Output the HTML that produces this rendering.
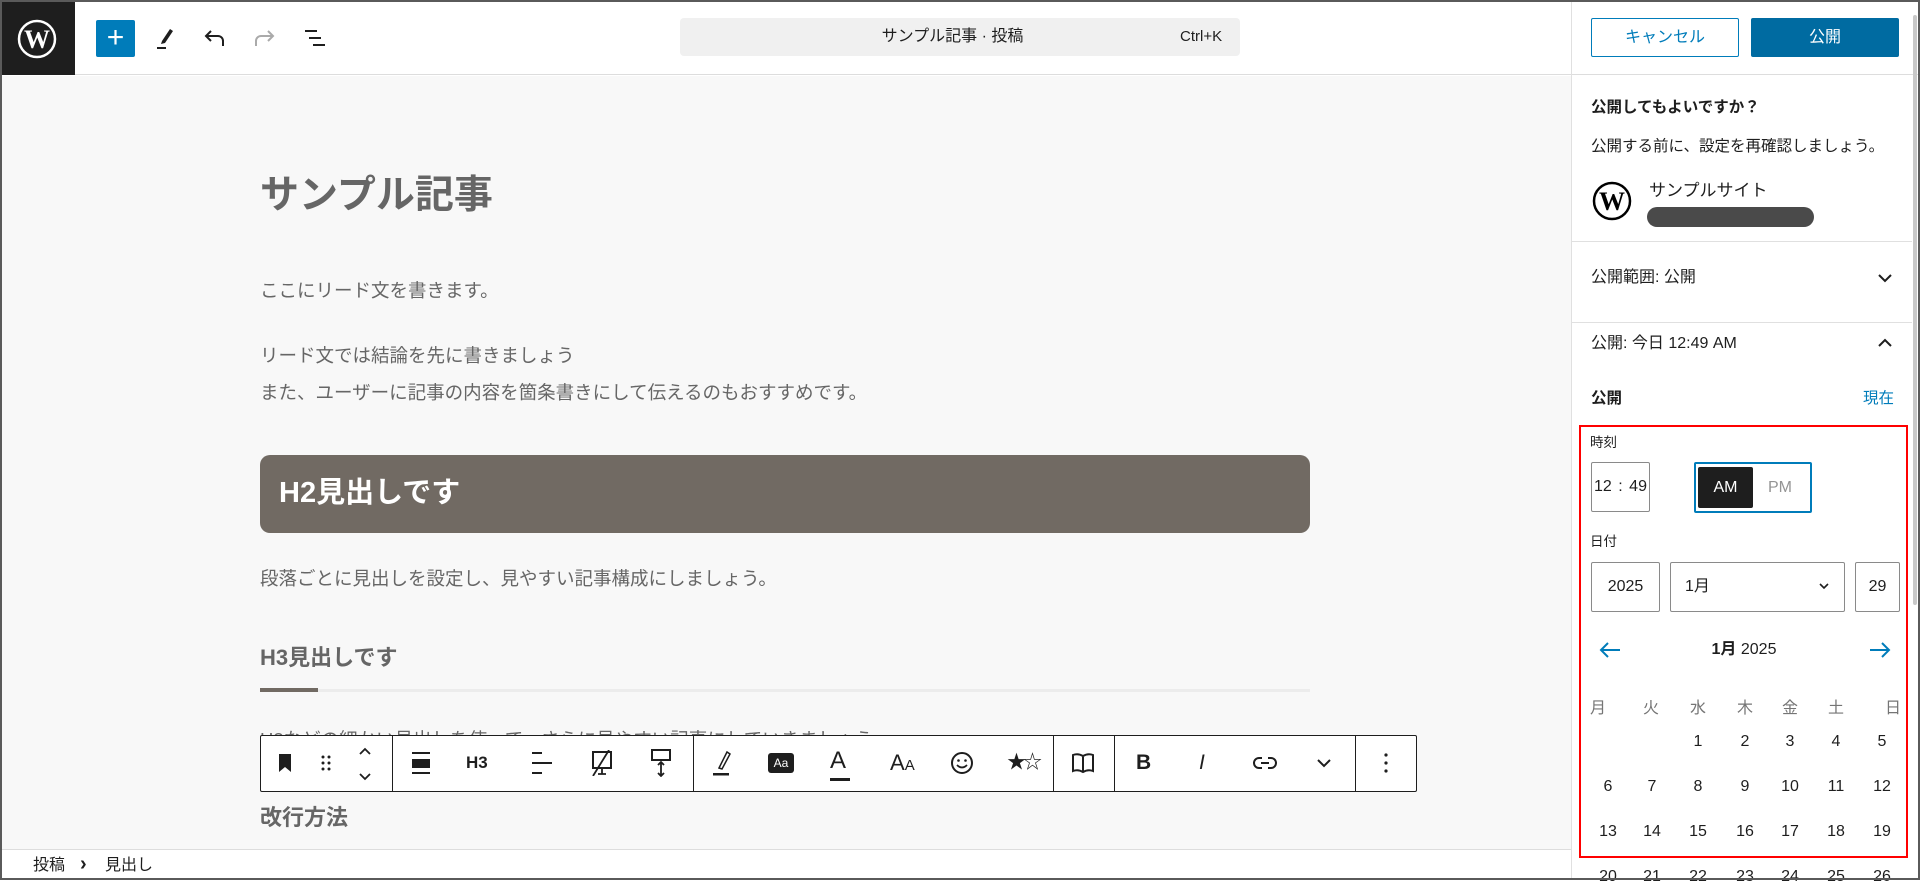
<!DOCTYPE html>
<html><head><meta charset="utf-8"><style>
*{box-sizing:border-box;margin:0;padding:0}
body{width:1920px;height:880px;overflow:hidden;position:relative;font-family:"Liberation Sans","Noto Sans CJK JP",sans-serif;background:#fff;color:#1e1e1e}
.a{position:absolute;white-space:nowrap}
.frame{position:absolute;left:0;top:0;width:1920px;height:880px;border:2px solid #5a5a5a;pointer-events:none;z-index:50}
.ct{color:#666}
</style></head><body>
<div class="frame"></div>
<!-- top bar -->
<div class="a" style="left:0;top:0;width:1920px;height:75px;background:#fff;border-bottom:1px solid #ddd"></div>
<div class="a" style="left:0;top:0;width:75px;height:75px;background:#1e1e1e"></div>
<svg class="a" style="left:17px;top:19px" width="40" height="40" viewBox="0 0 40 40"><circle cx="20" cy="20" r="18" fill="none" stroke="#fff" stroke-width="2.5"/><text x="20" y="29" text-anchor="middle" font-family="Liberation Serif" font-weight="bold" font-size="26" fill="#fff">W</text></svg>
<div class="a" style="left:96px;top:20px;width:39px;height:37px;background:#007cba;border-radius:2px;color:#fff;font-size:30px;line-height:35px;text-align:center">+</div>
<svg class="a" style="left:154px;top:26px" width="22" height="24" viewBox="0 0 22 24"><path d="M8 15 L16 3 L19 5 L11 17 L7 18 Z" fill="#1e1e1e"/><rect x="3" y="21" width="9" height="2" fill="#1e1e1e"/></svg>
<svg class="a" style="left:203px;top:28px" width="24" height="20" viewBox="0 0 24 20"><path d="M8 3 L3 8 L8 13 M3 8 H15 A5 5 0 0 1 20 13 V18" fill="none" stroke="#1e1e1e" stroke-width="2"/></svg>
<svg class="a" style="left:252px;top:28px" width="24" height="20" viewBox="0 0 24 20"><path d="M16 3 L21 8 L16 13 M21 8 H9 A5 5 0 0 0 4 13 V18" fill="none" stroke="#aaa" stroke-width="2"/></svg>
<svg class="a" style="left:303px;top:28px" width="24" height="20" viewBox="0 0 24 20"><path d="M2 3 H14 M6 10 H18 M10 17 H22" stroke="#1e1e1e" stroke-width="2"/></svg>
<div class="a" style="left:680px;top:18px;width:560px;height:38px;background:#f0f0f0;border-radius:4px"></div>
<div class="a" style="left:680px;top:18px;width:545px;height:38px;line-height:38px;font-size:16px;text-align:center;color:#1e1e1e">サンプル記事 · 投稿</div>
<div class="a" style="left:1180px;top:18px;line-height:38px;font-size:15px;color:#1e1e1e">Ctrl+K</div>
<!-- content -->
<div class="a" style="left:0;top:76px;width:1571px;height:773px;background:#f8f8f8"></div>
<div class="a ct" style="left:260px;top:170px;font-size:39px;font-weight:bold;line-height:52px">サンプル記事</div>
<div class="a ct" style="left:260px;top:279px;font-size:18.5px;line-height:24px">ここにリード文を書きます。</div>
<div class="a ct" style="left:260px;top:344px;font-size:18.5px;line-height:24px">リード文では結論を先に書きましょう</div>
<div class="a ct" style="left:260px;top:381px;font-size:18.5px;line-height:24px">また、ユーザーに記事の内容を箇条書きにして伝えるのもおすすめです。</div>
<div class="a" style="left:260px;top:455px;width:1050px;height:78px;background:#716a63;border-radius:10px"></div>
<div class="a" style="left:279px;top:474px;font-size:29px;font-weight:bold;color:#fff;line-height:38px">H2見出しです</div>
<div class="a ct" style="left:260px;top:567px;font-size:18.5px;line-height:24px">段落ごとに見出しを設定し、見やすい記事構成にしましょう。</div>
<div class="a ct" style="left:260px;top:644px;font-size:22px;font-weight:bold;line-height:28px">H3見出しです</div>
<div class="a" style="left:260px;top:689px;width:1050px;height:3px;background:#ececec"></div>
<div class="a" style="left:260px;top:688px;width:58px;height:4px;background:#716a63"></div>
<div class="a ct" style="left:260px;top:728px;font-size:18.5px;line-height:24px">H3などの細かい見出しを使って、さらに見やすい記事にしていきましょう。</div>
<div class="a ct" style="left:260px;top:804px;font-size:22px;font-weight:bold;line-height:28px">改行方法</div>
<!-- toolbar -->
<div class="a" style="left:260px;top:735px;width:1157px;height:57px;background:#fff;border:1.5px solid #1e1e1e;border-radius:2px"></div>
<div class="a" style="left:392px;top:735px;width:1px;height:57px;background:#1e1e1e"></div>
<div class="a" style="left:693px;top:735px;width:1px;height:57px;background:#1e1e1e"></div>
<div class="a" style="left:1053px;top:735px;width:1px;height:57px;background:#1e1e1e"></div>
<div class="a" style="left:1114px;top:735px;width:1px;height:57px;background:#1e1e1e"></div>
<div class="a" style="left:1355px;top:735px;width:1px;height:57px;background:#1e1e1e"></div>
<svg class="a" style="left:278px;top:754px" width="14" height="18" viewBox="0 0 14 18"><path d="M1 0 H13 V18 L7 13 L1 18 Z" fill="#1e1e1e"/></svg>
<svg class="a" style="left:320px;top:754px" width="12" height="18" viewBox="0 0 12 18"><g fill="#1e1e1e"><circle cx="3" cy="3" r="1.5"/><circle cx="9" cy="3" r="1.5"/><circle cx="3" cy="9" r="1.5"/><circle cx="9" cy="9" r="1.5"/><circle cx="3" cy="15" r="1.5"/><circle cx="9" cy="15" r="1.5"/></g></svg>
<svg class="a" style="left:358px;top:746px" width="14" height="36" viewBox="0 0 14 36"><path d="M2 8 L7 3 L12 8 M2 28 L7 33 L12 28" fill="none" stroke="#1e1e1e" stroke-width="1.8"/></svg>
<svg class="a" style="left:411px;top:751px" width="20" height="24" viewBox="0 0 20 24"><rect x="1" y="1" width="18" height="2" fill="#1e1e1e"/><rect x="1" y="8" width="18" height="9" fill="#1e1e1e"/><rect x="1" y="21" width="18" height="2" fill="#1e1e1e"/></svg>
<div class="a" style="left:466px;top:751px;font-size:17px;font-weight:bold;line-height:24px">H3</div>
<svg class="a" style="left:531px;top:751px" width="22" height="24" viewBox="0 0 22 24"><rect x="1" y="1" width="10" height="2" fill="#1e1e1e"/><rect x="1" y="11" width="20" height="2" fill="#1e1e1e"/><rect x="1" y="21" width="10" height="2" fill="#1e1e1e"/></svg>
<svg class="a" style="left:589px;top:750px" width="26" height="26" viewBox="0 0 26 26"><rect x="4" y="2" width="18" height="16" fill="none" stroke="#1e1e1e" stroke-width="2"/><path d="M9 24 H17 M13 18 V24 M4 26 L20 0" stroke="#1e1e1e" stroke-width="1.8"/></svg>
<svg class="a" style="left:650px;top:749px" width="22" height="28" viewBox="0 0 22 28"><rect x="2" y="1" width="18" height="10" fill="none" stroke="#1e1e1e" stroke-width="2"/><path d="M11 13 V27 M8 16 L11 13 L14 16 M8 24 L11 27 L14 24" fill="none" stroke="#1e1e1e" stroke-width="1.8"/></svg>
<svg class="a" style="left:711px;top:749px" width="22" height="28" viewBox="0 0 22 28"><path d="M8 19 L16 3 L19 5 L11 20 Z" fill="none" stroke="#1e1e1e" stroke-width="1.5"/><rect x="2" y="24" width="16" height="2.5" fill="#1e1e1e"/></svg>
<div class="a" style="left:768px;top:753px;width:26px;height:20px;background:#1e1e1e;border-radius:3px;color:#fff;font-size:12px;line-height:20px;text-align:center">Aa</div>
<div class="a" style="left:830px;top:746px;font-size:24px;line-height:30px;color:#1e1e1e">A</div>
<div class="a" style="left:830px;top:778px;width:20px;height:2.5px;background:#1e1e1e"></div>
<div class="a" style="left:890px;top:749px;line-height:28px;color:#1e1e1e"><span style="font-size:22px">A</span><span style="font-size:15px">A</span></div>
<svg class="a" style="left:950px;top:751px" width="24" height="24" viewBox="0 0 24 24"><circle cx="12" cy="12" r="10" fill="none" stroke="#1e1e1e" stroke-width="2"/><circle cx="8.5" cy="9.5" r="1.3" fill="#1e1e1e"/><circle cx="15.5" cy="9.5" r="1.3" fill="#1e1e1e"/><path d="M7 14 Q12 19 17 14" fill="none" stroke="#1e1e1e" stroke-width="1.8"/></svg>
<div class="a" style="left:1007px;top:749px;font-size:19px;line-height:28px;color:#1e1e1e;letter-spacing:-3px">★☆</div>
<svg class="a" style="left:1071px;top:752px" width="24" height="22" viewBox="0 0 24 22"><path d="M12 4 Q7 1 2 3 V19 Q7 17 12 20 Q17 17 22 19 V3 Q17 1 12 4 Z M12 4 V20" fill="none" stroke="#1e1e1e" stroke-width="2"/></svg>
<div class="a" style="left:1136px;top:749px;font-size:21px;font-weight:bold;line-height:28px">B</div>
<div class="a" style="left:1199px;top:749px;font-size:21px;font-style:italic;line-height:28px">I</div>
<svg class="a" style="left:1253px;top:755px" width="24" height="16" viewBox="0 0 24 16"><path d="M9 3 H6 A5 5 0 0 0 6 13 H9 M15 3 H18 A5 5 0 0 1 18 13 H15 M8 8 H16" fill="none" stroke="#1e1e1e" stroke-width="2"/></svg>
<svg class="a" style="left:1316px;top:758px" width="16" height="10" viewBox="0 0 16 10"><path d="M2 2 L8 8 L14 2" fill="none" stroke="#1e1e1e" stroke-width="2"/></svg>
<svg class="a" style="left:1383px;top:752px" width="6" height="22" viewBox="0 0 6 22"><g fill="#1e1e1e"><circle cx="3" cy="3" r="1.6"/><circle cx="3" cy="11" r="1.6"/><circle cx="3" cy="19" r="1.6"/></g></svg>
<!-- breadcrumb -->
<div class="a" style="left:0;top:849px;width:1571px;height:31px;background:#fff;border-top:1px solid #ddd"></div>
<div class="a" style="left:33px;top:853px;font-size:16px;line-height:26px">投稿</div>
<div class="a" style="left:80px;top:851px;font-size:20px;line-height:26px;font-weight:bold">›</div>
<div class="a" style="left:105px;top:853px;font-size:16px;line-height:26px">見出し</div>
<!-- sidebar -->
<div class="a" style="left:1571px;top:0;width:1px;height:880px;background:#e0e0e0"></div>
<div class="a" style="left:1913px;top:15px;width:4px;height:590px;background:#c8c8c8;border-radius:2px"></div>
<div class="a" style="left:1591px;top:18px;width:148px;height:39px;border:1px solid #007cba;border-radius:2px;color:#007cba;font-size:16px;line-height:37px;text-align:center">キャンセル</div>
<div class="a" style="left:1751px;top:18px;width:148px;height:39px;background:#006ba1;border-radius:2px;color:#fff;font-size:16px;line-height:39px;text-align:center">公開</div>
<div class="a" style="left:1591px;top:97px;font-size:15.5px;font-weight:bold;line-height:22px">公開してもよいですか？</div>
<div class="a" style="left:1591px;top:136px;font-size:15.5px;line-height:22px">公開する前に、設定を再確認しましょう。</div>
<svg class="a" style="left:1592px;top:181px" width="40" height="40" viewBox="0 0 40 40"><circle cx="20" cy="20" r="18" fill="none" stroke="#000" stroke-width="2.5"/><text x="20" y="29" text-anchor="middle" font-family="Liberation Serif" font-weight="bold" font-size="26" fill="#000">W</text></svg>
<div class="a" style="left:1649px;top:180px;font-size:17px;line-height:22px">サンプルサイト</div>
<div class="a" style="left:1647px;top:207px;width:167px;height:20px;background:#4a4a4a;border-radius:10px"></div>
<div class="a" style="left:1572px;top:241px;width:340px;height:1px;background:#e0e0e0"></div>
<div class="a" style="left:1591px;top:267px;font-size:16px;line-height:22px">公開範囲: 公開</div>
<svg class="a" style="left:1877px;top:273px" width="16" height="10" viewBox="0 0 16 10"><path d="M2 2 L8 8 L14 2" fill="none" stroke="#1e1e1e" stroke-width="2"/></svg>
<div class="a" style="left:1572px;top:322px;width:340px;height:1px;background:#e0e0e0"></div>
<div class="a" style="left:1591px;top:333px;font-size:16px;line-height:22px">公開: 今日 12:49 AM</div>
<svg class="a" style="left:1877px;top:338px" width="16" height="10" viewBox="0 0 16 10"><path d="M2 8 L8 2 L14 8" fill="none" stroke="#1e1e1e" stroke-width="2"/></svg>
<div class="a" style="left:1591px;top:388px;font-size:15.5px;font-weight:bold;line-height:22px">公開</div>
<div class="a" style="left:1863px;top:388px;font-size:15.5px;color:#007cba;line-height:22px">現在</div>
<div class="a" style="left:1579px;top:425px;width:329px;height:433px;border:2.5px solid #f00"></div>
<div class="a" style="left:1590px;top:434px;font-size:13.5px;line-height:18px">時刻</div>
<div class="a" style="left:1591px;top:462px;width:59px;height:50px;border:1px solid #8a8a8a;border-radius:2px;font-size:16px;line-height:48px;text-align:center;word-spacing:2px">12 : 49</div>
<div class="a" style="left:1694px;top:462px;width:118px;height:51px;border:2px solid #007cba;border-radius:2px"></div>
<div class="a" style="left:1698px;top:467px;width:55px;height:41px;background:#1e1e1e;border-radius:2px;color:#fff;font-size:16px;line-height:41px;text-align:center">AM</div>
<div class="a" style="left:1753px;top:467px;width:54px;height:41px;color:#949494;font-size:16px;line-height:41px;text-align:center">PM</div>
<div class="a" style="left:1590px;top:533px;font-size:13.5px;line-height:18px">日付</div>
<div class="a" style="left:1591px;top:562px;width:69px;height:50px;border:1px solid #8a8a8a;border-radius:2px;font-size:16px;line-height:48px;text-align:center">2025</div>
<div class="a" style="left:1670px;top:562px;width:175px;height:50px;border:1px solid #8a8a8a;border-radius:2px;font-size:16px;line-height:48px;padding-left:14px">1月</div>
<svg class="a" style="left:1818px;top:582px" width="12" height="8" viewBox="0 0 12 8"><path d="M2 2 L6 6 L10 2" fill="none" stroke="#1e1e1e" stroke-width="1.6"/></svg>
<div class="a" style="left:1855px;top:562px;width:45px;height:50px;border:1px solid #8a8a8a;border-radius:2px;font-size:16px;line-height:48px;text-align:center">29</div>
<svg class="a" style="left:1599px;top:641px" width="22" height="18" viewBox="0 0 22 18"><path d="M9 2 L2 9 L9 16 M2 9 H21" fill="none" stroke="#007cba" stroke-width="2"/></svg>
<svg class="a" style="left:1869px;top:641px" width="22" height="18" viewBox="0 0 22 18"><path d="M13 2 L20 9 L13 16 M20 9 H1" fill="none" stroke="#007cba" stroke-width="2"/></svg>
<div class="a" style="left:1704px;top:639px;width:80px;text-align:center;font-size:16px;line-height:22px"><b>1月</b> 2025</div>
<div style="position:absolute;left:0;top:0;width:1920px;height:880px;font-size:16px;color:#757575">
<div class="a" style="left:1590px;top:694px">月</div><div class="a" style="left:1643px;top:694px">火</div><div class="a" style="left:1690px;top:694px">水</div><div class="a" style="left:1737px;top:694px">木</div><div class="a" style="left:1782px;top:694px">金</div><div class="a" style="left:1828px;top:694px">土</div><div class="a" style="left:1885px;top:694px">日</div>
</div>
<div style="position:absolute;left:0;top:0;width:1920px;height:880px;font-size:16px;color:#1e1e1e">
<div class="a" style="left:1690px;top:733px;width:16px;text-align:center">1</div><div class="a" style="left:1737px;top:733px;width:16px;text-align:center">2</div><div class="a" style="left:1782px;top:733px;width:16px;text-align:center">3</div><div class="a" style="left:1828px;top:733px;width:16px;text-align:center">4</div><div class="a" style="left:1874px;top:733px;width:16px;text-align:center">5</div>
<div class="a" style="left:1598px;top:778px;width:20px;text-align:center">6</div><div class="a" style="left:1642px;top:778px;width:20px;text-align:center">7</div><div class="a" style="left:1688px;top:778px;width:20px;text-align:center">8</div><div class="a" style="left:1735px;top:778px;width:20px;text-align:center">9</div><div class="a" style="left:1780px;top:778px;width:20px;text-align:center">10</div><div class="a" style="left:1826px;top:778px;width:20px;text-align:center">11</div><div class="a" style="left:1872px;top:778px;width:20px;text-align:center">12</div>
<div class="a" style="left:1598px;top:823px;width:20px;text-align:center">13</div><div class="a" style="left:1642px;top:823px;width:20px;text-align:center">14</div><div class="a" style="left:1688px;top:823px;width:20px;text-align:center">15</div><div class="a" style="left:1735px;top:823px;width:20px;text-align:center">16</div><div class="a" style="left:1780px;top:823px;width:20px;text-align:center">17</div><div class="a" style="left:1826px;top:823px;width:20px;text-align:center">18</div><div class="a" style="left:1872px;top:823px;width:20px;text-align:center">19</div>
<div class="a" style="left:1598px;top:868px;width:20px;text-align:center">20</div><div class="a" style="left:1642px;top:868px;width:20px;text-align:center">21</div><div class="a" style="left:1688px;top:868px;width:20px;text-align:center">22</div><div class="a" style="left:1735px;top:868px;width:20px;text-align:center">23</div><div class="a" style="left:1780px;top:868px;width:20px;text-align:center">24</div><div class="a" style="left:1826px;top:868px;width:20px;text-align:center">25</div><div class="a" style="left:1872px;top:868px;width:20px;text-align:center">26</div>
</div>
</body></html>
